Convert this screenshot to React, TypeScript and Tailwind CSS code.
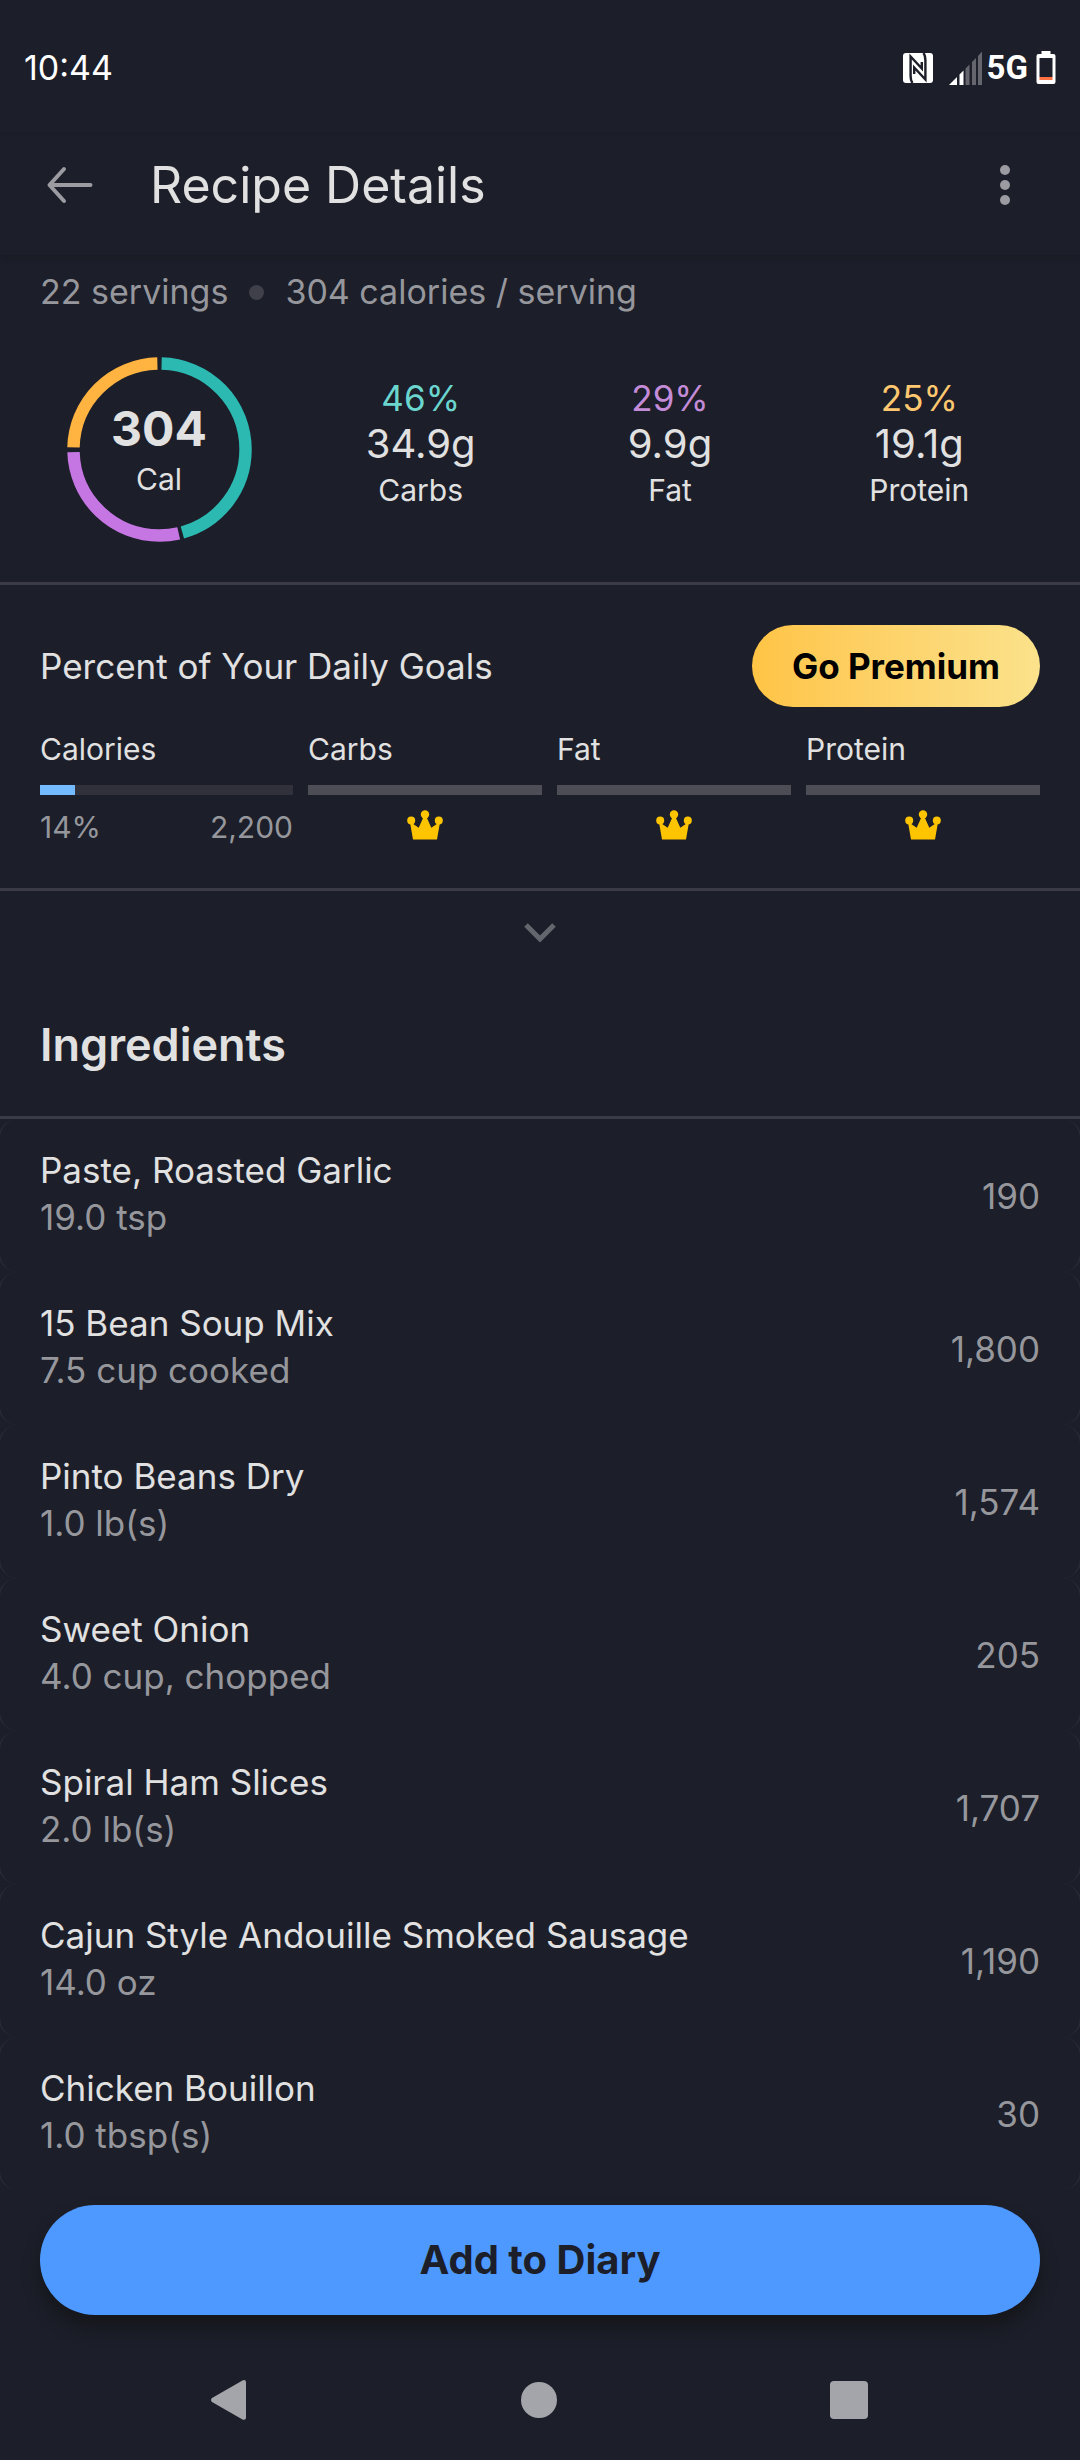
import React from "react";

type Macro = { name: string; percent: string; grams: string; color: string };

const macros: Macro[] = [
  { name: "Carbs", percent: "46%", grams: "34.9g", color: "text-[#6bd6cf]" },
  { name: "Fat", percent: "29%", grams: "9.9g", color: "text-[#c48cd8]" },
  { name: "Protein", percent: "25%", grams: "19.1g", color: "text-[#ffc870]" },
];

const ingredients = [
  { name: "Paste, Roasted Garlic", amount: "19.0 tsp", calories: "190" },
  { name: "15 Bean Soup Mix", amount: "7.5 cup cooked", calories: "1,800" },
  { name: "Pinto Beans Dry", amount: "1.0 lb(s)", calories: "1,574" },
  { name: "Sweet Onion", amount: "4.0 cup, chopped", calories: "205" },
  { name: "Spiral Ham Slices", amount: "2.0 lb(s)", calories: "1,707" },
  { name: "Cajun Style Andouille Smoked Sausage", amount: "14.0 oz", calories: "1,190" },
  { name: "Chicken Bouillon", amount: "1.0 tbsp(s)", calories: "30" },
];

function StatusBar() {
  return (
    <div className="flex h-[135px] items-center justify-between pl-6 pr-6 text-white">
      <span className="text-[34px] leading-none">10:44</span>
      <div className="flex items-center">
        <svg width="30" height="30" viewBox="0 0 30 30" aria-label="NFC">
          <rect width="30" height="30" rx="3" fill="#fff" />
          <g fill="none" stroke="#1c1e29" strokeWidth="2.400">
            <path d="M9.500 30C8 28 7.600 26 7.600 23V3.500L18.800 15.500V9" />
            <path d="M20.500 0C22 2 22.400 4 22.400 7V26.500L11.200 14.500V21" />
          </g>
        </svg>
        <svg className="ml-4" width="34" height="34" viewBox="0 0 34 34" aria-label="Signal">
          <path d="M0 34L8 26V34Z M10.500 23.500L14.500 19.500V34H10.500Z" fill="#fff" />
          <path d="M16.500 17.500L20.500 13.500V34H16.500Z M23 11L27 7V34H23Z M29 5L33 .5V34H29Z" fill="#64656d" />
        </svg>
        <span className="ml-1 font-[Roboto] text-[33px] leading-none font-bold">5G</span>
        <svg className="ml-2" width="20" height="33" viewBox="0 0 20 33" aria-label="Battery">
          <path d="M5.500 0H14.500V3H17.500Q19.500 3 19.500 5V31Q19.500 33 17.500 33H2.500Q.5 33 .5 31V5Q.5 3 2.500 3H5.500Z" fill="#fff" />
          <rect x="3.500" y="7" width="13" height="19" fill="#1c1e29" />
          <rect x="3.500" y="26" width="13" height="3" fill="#ff7043" />
        </svg>
      </div>
    </div>
  );
}

function Header() {
  return (
    <header className="flex h-[120px] items-center pr-[54px] pb-5 pl-[46px] shadow-[0_3px_6px_rgba(0,0,0,0.12)]">
      <button aria-label="Back" className="flex h-20 items-center">
        <svg width="48" height="40" viewBox="0 0 48 40" fill="none" stroke="#9b9ba1" strokeWidth="4" strokeLinecap="round" strokeLinejoin="round">
          <path d="M44.500 20H4M18 4L3.500 20L18 36" />
          <path d="M4 17V23L8 20Z" fill="#9b9ba1" stroke="none" />
        </svg>
      </button>
      <h1 className="ml-14 flex-1 text-[50px] leading-[60px]">Recipe Details</h1>
      <button aria-label="More options" className="flex h-20 items-center px-4">
        <svg width="10" height="40" viewBox="0 0 10 40" fill="#9b9ba1">
          <circle cx="5" cy="5" r="5" />
          <circle cx="5" cy="20" r="5" />
          <circle cx="5" cy="35" r="5" />
        </svg>
      </button>
    </header>
  );
}

function CalorieRing() {
  return (
    <div className="grid w-[246px] place-items-center">
      <svg className="col-start-1 row-start-1" width="185" height="185" viewBox="0 0 186 186" fill="none" strokeWidth="12.500" aria-hidden="true">
        <g transform="rotate(-90 93 93)">
          <circle cx="93" cy="93" r="86.500" stroke="#2bb9b1" pathLength="1000" strokeDasharray="453 547" strokeDashoffset="-4" />
          <circle cx="93" cy="93" r="86.500" stroke="#c576e3" pathLength="1000" strokeDasharray="281 719" strokeDashoffset="-464" />
          <circle cx="93" cy="93" r="86.500" stroke="#ffb340" pathLength="1000" strokeDasharray="242 758" strokeDashoffset="-754" />
        </g>
      </svg>
      <div className="col-start-1 row-start-1 pt-1 text-center">
        <p className="text-[48px] leading-[54px] font-bold">304</p>
        <p className="text-[30px] leading-[46px]">Cal</p>
      </div>
    </div>
  );
}

function Crown() {
  return (
    <svg className="mx-auto" width="36" height="30" viewBox="0 0 36 30" fill="#ffc400" aria-label="Premium">
      <circle cx="18" cy="4.500" r="4.200" />
      <circle cx="4.200" cy="10.600" r="4" />
      <circle cx="31.800" cy="10.600" r="4" />
      <path d="M16.500 7H19.500L24.300 17.800L30.500 13.500H32.800L30 29.500H6L3.200 13.500H5.500L11.700 17.800Z" />
    </svg>
  );
}

export default function App() {
  return (
    <div className="flex min-h-screen w-full flex-col bg-[#1c1e29] font-[Inter,sans-serif] text-[#e1e1e1]">
      <StatusBar />
      <Header />

      <main>
        <section className="border-b-[3px] border-[#3a3b46]">
          <div className="flex items-center px-10 pt-[13px] text-[34px] leading-[48px] text-[#96979c]">
            <span>22 servings</span>
            <span className="mx-[21px] size-[15px] rounded-full bg-[#3f4049]" />
            <span>304 calories / serving</span>
          </div>
          <div className="flex gap-3.5 px-9 pt-[41px] pb-10">
            <CalorieRing />
            <div className="grid flex-1 grid-cols-3 items-center pb-3 text-center">
              {macros.map((m) => (
                <div key={m.name}>
                  <p className={`text-[35px] leading-[44px] ${m.color}`}>{m.percent}</p>
                  <p className="text-[40px] leading-[48px]">{m.grams}</p>
                  <p className="text-[30px] leading-[44px]">{m.name}</p>
                </div>
              ))}
            </div>
          </div>
        </section>

        <section className="border-b-[3px] border-[#3a3b46] px-10 py-10">
          <div className="flex items-center justify-between">
            <h2 className="text-[35px] leading-[48px]">Percent of Your Daily Goals</h2>
            <button className="h-[82px] rounded-full bg-linear-to-r from-[#ffc445] to-[#fbe28b] px-10 text-[35px] font-bold text-black">
              Go Premium
            </button>
          </div>
          <div className="mt-[21px] grid grid-cols-[253fr_234fr_234fr_234fr] gap-[15px] text-[30px] leading-[42px]">
            <div>
              <p>Calories</p>
              <div className="mt-[15px] h-[10px] bg-[#30313b]">
                <div className="h-full w-[14%] bg-[#74baff]" />
              </div>
              <div className="mt-[11px] flex justify-between text-[#96979c]">
                <span>14%</span>
                <span>2,200</span>
              </div>
            </div>
            {macros.map((m) => (
              <div key={m.name}>
                <p>{m.name}</p>
                <div className="mt-[15px] mb-[15px] h-[10px] bg-[#4c4d55]" />
                <Crown />
              </div>
            ))}
          </div>
        </section>

        <button aria-label="Expand nutrition" className="flex h-[84px] w-full items-center justify-center">
          <svg width="32" height="20" viewBox="0 0 32 20" fill="none" stroke="#64666e" strokeWidth="5">
            <path d="M2 2L16 16L30 2" />
          </svg>
        </button>

        <section>
          <h2 className="border-b-[3px] border-[#3a3b46] px-10 pt-[42px] pb-[43px] text-[45px] leading-[56px] font-semibold">
            Ingredients
          </h2>
          <ul className="overflow-hidden">
            {ingredients.map((item) => (
              <li key={item.name} className="relative flex items-center justify-between px-10 text-[35px] leading-[47px]">
                <div aria-hidden="true" className="absolute inset-y-0 -inset-x-0.5 rounded-[20px] border-x-2 border-[#282a35]" />
                <div className="relative pt-7 pb-[31px]">
                  <p>{item.name}</p>
                  <p className="text-[#96979c]">{item.amount}</p>
                </div>
                <span className="relative pt-0.5 text-[#96979c]">{item.calories}</span>
              </li>
            ))}
          </ul>
        </section>
      </main>

      <div className="px-10 pt-[15px]">
        <button className="h-[110px] w-full rounded-full bg-[#4e99ff] text-[40px] font-bold text-[#1c1e29] shadow-[0_12px_16px_rgba(18,20,22,0.7)]">
          Add to Diary
        </button>
      </div>

      <nav aria-label="System navigation" className="flex flex-1 items-center justify-between pt-6 pr-[212px] pl-[210px]">
        <button aria-label="Back">
          <svg width="38" height="40" viewBox="0 0 38 40" fill="#a4a5aa">
            <path d="M32.500 .4Q36 -.8 36 2.500V37.500Q36 40.800 32.500 39.400L2 22Q0 20 2 18Z" />
          </svg>
        </button>
        <button aria-label="Home" className="size-9 rounded-full bg-[#a4a5aa]" />
        <button aria-label="Recent apps" className="size-[38px] rounded-[4px] bg-[#a4a5aa]" />
      </nav>
    </div>
  );
}
